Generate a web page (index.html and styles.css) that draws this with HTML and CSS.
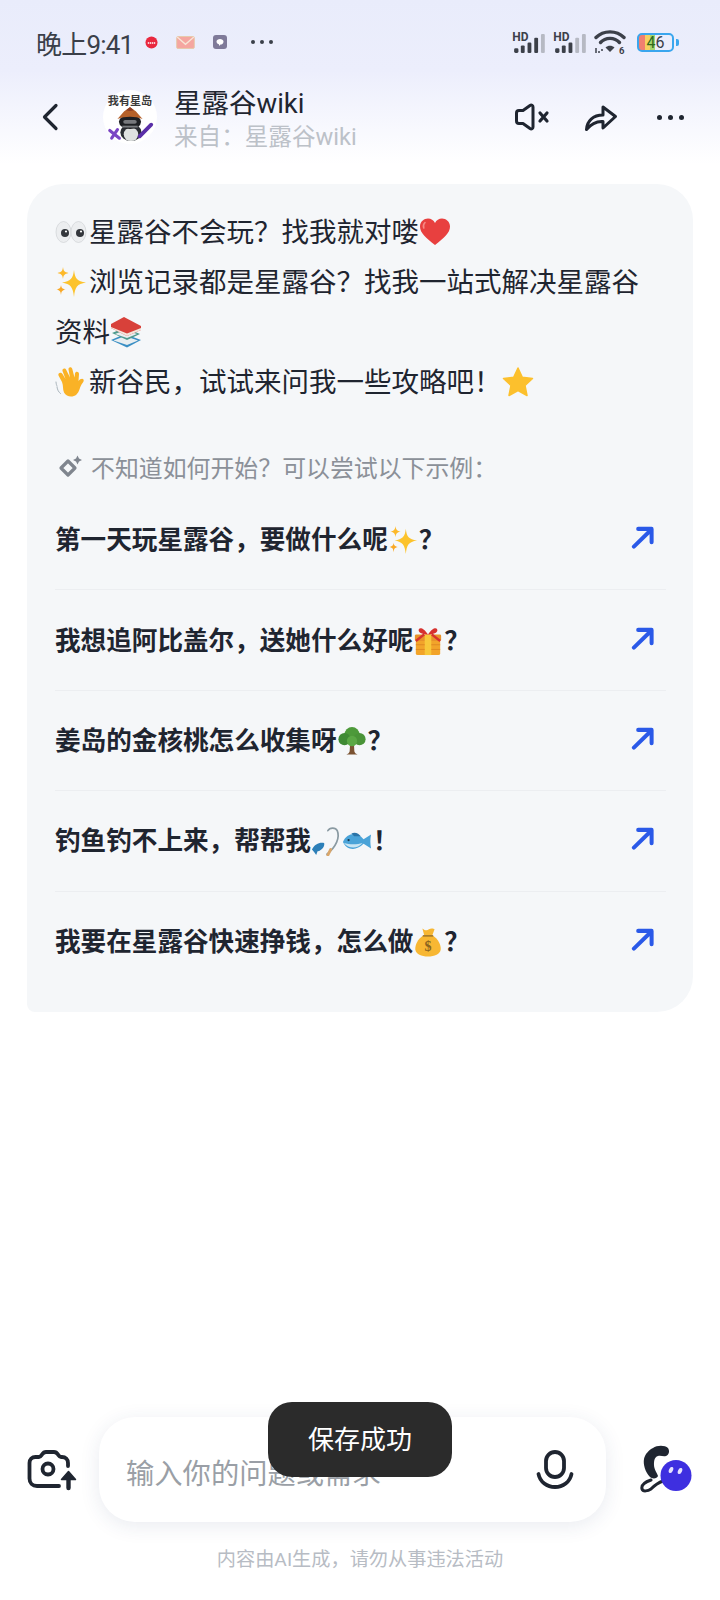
FILE: index.html
```html
<!DOCTYPE html>
<html lang="zh-CN">
<head>
  <meta charset="UTF-8">
  <title>星露谷wiki</title>
  <link rel="stylesheet" href="styles.css">
</head>
<body>
  <!-- emoji shapes, reused with <use> -->
  <svg class="defs" xmlns="http://www.w3.org/2000/svg">
    <symbol id="e-eyes" viewBox="0 0 32 32">
      <ellipse cx="8.500" cy="16" rx="7.500" ry="10.500" fill="#eceef0" stroke="#c9ccd0" stroke-width=".6"/>
      <ellipse cx="23.500" cy="16" rx="7.500" ry="10.500" fill="#eceef0" stroke="#c9ccd0" stroke-width=".6"/>
      <circle cx="10" cy="17" r="4" fill="#33373c"/>
      <circle cx="25" cy="17" r="4" fill="#33373c"/>
      <circle cx="11" cy="15.500" r="1.100" fill="#fff"/>
      <circle cx="26" cy="15.500" r="1.100" fill="#fff"/>
    </symbol>
    <symbol id="e-heart" viewBox="0 0 32 32">
      <path d="M16 29C7 22 1 17 1 10.500C1 5.500 5 2.500 9 2.500C12 2.500 14.600 4 16 7C17.400 4 20 2.500 23 2.500C27 2.500 31 5.500 31 10.500C31 17 25 22 16 29Z" fill="#e8403f"/>
      <path d="M6 6.500C4.500 8 4 10 4.800 12" stroke="#f58a85" stroke-width="1.600" fill="none" stroke-linecap="round"/>
    </symbol>
    <symbol id="e-spark" viewBox="0 0 32 32">
      <path d="M19 4C20 13 22 15 31 16.500C22 18 20 21 19 31C18 21 15.500 18 7 16.500C15.500 15 18 13 19 4Z" fill="#fcc32c"/>
      <path d="M8 1C8.500 5 9.500 6 13.500 7C9.500 8 8.500 9 8 13C7.500 9 6.500 8 2.500 7C6.500 6 7.500 5 8 1Z" fill="#fdb92a"/>
      <path d="M6 19C6.500 22 7 22.500 10.500 23.500C7 24.500 6.500 25 6 29C5.500 25 5 24.500 1.500 23.500C5 22.500 5.500 22 6 19Z" fill="#f9a825"/>
    </symbol>
    <symbol id="e-books" viewBox="0 0 32 32">
      <path d="M1 24L15 18L31 24L17 31.500Z" fill="#3a8fc4"/>
      <path d="M3.500 24.500L15 20L28 24.500L17 29Z" fill="#e9eef0"/>
      <path d="M2 17L15 11.500L30 18L17 24Z" fill="#4e9a8c"/>
      <path d="M5 18L15 14L27 18L17 22Z" fill="#e9eef0"/>
      <path d="M1 8L14 1L31 10L31 14L17 20L1 12Z" fill="#d8413a"/>
      <path d="M1 11L17 17.500L31 12V14L17 20L1 12Z" fill="#f3e6dc"/>
    </symbol>
    <symbol id="e-wave" viewBox="0 0 32 32">
      <path d="M7 16L3.500 9.500C2.500 7 6 5.500 7.500 8L10.500 13L7.500 5C6.800 2.500 10.200 1.500 11.300 4L15 11.500L13.500 3.500C13.200 1 16.700 .5 17.300 3L19.500 11.500L20 7.500C20.500 5 24 5.500 24 8L23.500 15C25 13 27.500 12 28.500 13.500C29.500 15 27.500 17 26.500 18.500C24.500 22 24.500 25.500 21.500 28.500C17.500 32 11.500 31 9 26.500C7.500 23 8.500 19.500 7 16Z" fill="#fab226"/>
      <path d="M2 21C2.500 24 3.500 26 5.500 27.500M1 16C1.200 18 1.400 19 2 20" stroke="#a9b4bb" stroke-width="1" fill="none" stroke-linecap="round"/>
    </symbol>
    <symbol id="e-star" viewBox="0 0 32 32">
      <path d="M16 2L20.300 11.300L30.500 12.500L23 19.500L25 29.500L16 24.500L7 29.500L9 19.500L1.500 12.500L11.700 11.300Z" fill="#fcc02d" stroke="#fcc02d" stroke-width="1.500" stroke-linejoin="round"/>
    </symbol>
    <symbol id="e-gift" viewBox="0 0 32 32">
      <rect x="3" y="11" width="26" height="20" rx="2" fill="#f2a42a"/>
      <rect x="2" y="9" width="28" height="7" rx="1.500" fill="#e8922a"/>
      <rect x="12.500" y="9" width="7" height="22" fill="#f8c83a"/>
      <path d="M3 20H12.500M19.500 20H29M3 25H12.500M19.500 25H29" stroke="#d98120" stroke-width=".8"/>
      <path d="M16 9C12 9 6 8 6 4.500C6 1 11 1 16 9C21 1 26 1 26 4.500C26 8 20 9 16 9Z" fill="#d7322f"/>
      <path d="M12 9L3 16M20 9L29 16" stroke="#d7322f" stroke-width="2.500"/>
    </symbol>
    <symbol id="e-tree" viewBox="0 0 32 32">
      <path d="M14 18H18L18.500 27C19 29 20.500 30 22 30.500H10C11.500 30 13 29 13.500 27Z" fill="#7a5231"/>
      <circle cx="16" cy="9" r="8" fill="#4d9a3a"/>
      <circle cx="8" cy="14" r="6.500" fill="#3f8a34"/>
      <circle cx="24" cy="14" r="6.500" fill="#4a9438"/>
      <circle cx="16" cy="16" r="5.500" fill="#5ba845"/>
    </symbol>
    <symbol id="e-rod" viewBox="0 0 32 32">
      <path d="M17 30C27 22 31 12 28 5C26 1 20 1.500 18 5" stroke="#8a9aa2" stroke-width="1.800" fill="none" stroke-linecap="round"/>
      <path d="M1 25C4 19 9 17 14 18C15 21 12 26 7 27L5.500 31L3.500 28Z" fill="#2c7fb8"/>
      <path d="M21 25L18 31" stroke="#d9a66a" stroke-width="3" stroke-linecap="round"/>
    </symbol>
    <symbol id="e-fish" viewBox="0 0 32 32">
      <path d="M1 17C5 8 15 5 23 14L31 9C30 14 30 18 31 24L23 19C15 27 5 26 1 17Z" fill="#4aa3d8"/>
      <path d="M2 18C7 24 16 25 22 18C16 20 8 20 2 18Z" fill="#c9e5f3"/>
      <path d="M10 8C14 6 18 8 20 11L13 11Z" fill="#2a74a8"/>
      <circle cx="7" cy="15" r="1.200" fill="#16364a"/>
    </symbol>
    <symbol id="e-bag" viewBox="0 0 32 32">
      <path d="M11 9C5 13 2 19 2.500 24C3 29 9 31.500 16 31.500C23 31.500 29 29 29.500 24C30 19 27 13 21 9Z" fill="#f7b733"/>
      <path d="M10 1.500C13 4 15 4 17 2.500C19 1 22 1.500 23 2.500L20.500 9H12Z" fill="#f7b733"/>
      <path d="M11 9.500H21" stroke="#8a6420" stroke-width="1.500" stroke-linecap="round"/>
      <text x="16" y="26" text-anchor="middle" class="bag-sign">$</text>
    </symbol>
    <symbol id="i-go" viewBox="0 0 24 24">
      <path d="M3 21.500L20 5M7.500 3H21.500V17" stroke="#2a59e8" stroke-width="4.200" fill="none" stroke-linecap="round" stroke-linejoin="round"/>
    </symbol>
  </svg>

  <div class="top">
    <div class="status">
      <span class="clock">晚上9:41</span>
      <svg class="note red" viewBox="0 0 14 14"><circle cx="7" cy="7" r="6.500" fill="#e9283f"/><path d="M3 7.500H11" stroke="#fff" stroke-width="1.800" stroke-dasharray="1.500 .7"/></svg>
      <svg class="note mail" viewBox="0 0 20 14"><rect x=".5" y=".5" width="19" height="13" rx="1.500" fill="#f5a6a0" stroke="#e5c9a8"/><path d="M1 1L10 9L19 1" stroke="#f7e6d6" stroke-width="1.400" fill="none"/></svg>
      <svg class="note bot" viewBox="0 0 14 14"><rect width="14" height="14" rx="3" fill="#7f7a99"/><path d="M3.500 6.500C3.500 3 10.500 3 10.500 6.500C10.500 9 8.500 9.500 7.500 9.500L6 11V9.300C4.500 9 3.500 8 3.500 6.500Z" fill="#fff"/></svg>
      <span class="dots-small"><i></i><i></i><i></i></span>
      <div class="status-right">
        <svg class="bars" viewBox="0 0 34 24">
          <text x="0" y="10" class="hd">HD</text>
          <rect x="2" y="18" width="4.500" height="5" rx="1.500" fill="#3c4049"/>
          <rect x="9" y="15" width="4" height="8" rx="1.200" fill="#3c4049"/>
          <rect x="16" y="12" width="4" height="11" rx="1.200" fill="#3c4049"/>
          <rect x="23" y="7" width="4" height="16" rx="1.200" fill="#3c4049"/>
          <rect x="30" y="3" width="4" height="20" rx="1.200" fill="#b6b9c3"/>
        </svg>
        <svg class="bars" viewBox="0 0 34 24">
          <text x="0" y="10" class="hd">HD</text>
          <rect x="2" y="18" width="4.500" height="5" rx="1.500" fill="#3c4049"/>
          <rect x="9" y="15" width="4" height="8" rx="1.200" fill="#3c4049"/>
          <rect x="16" y="12" width="4" height="11" rx="1.200" fill="#3c4049"/>
          <rect x="23" y="7" width="4" height="16" rx="1.200" fill="#b6b9c3"/>
          <rect x="30" y="3" width="4" height="20" rx="1.200" fill="#b6b9c3"/>
        </svg>
        <svg class="wifi" viewBox="0 0 32 26">
          <path d="M2 8.500C9.500 1 22.500 1 30 8.500" stroke="#3c4049" stroke-width="3.400" fill="none" stroke-linecap="round"/>
          <path d="M6.500 13.500C11.500 8 20.500 8 25.500 13.500" stroke="#3c4049" stroke-width="3.400" fill="none" stroke-linecap="round"/>
          <path d="M11.500 18.500L16 23L20.500 18.500C18 16 14 16 11.500 18.500Z" fill="#3c4049"/>
          <path d="M2 19V24M5 22L5 24M7 21H9" stroke="#3c4049" stroke-width="1.500" fill="none"/>
          <text x="25" y="25" class="wifi-six">6</text>
        </svg>
        <div class="battery">
          <div class="battery-body"><span class="battery-four">4</span><span>6</span></div>
          <i class="battery-tip"></i>
        </div>
      </div>
    </div>
    <div class="nav">
      <svg class="back" viewBox="0 0 18 28"><path d="M15 2.500L3.500 14L15 25.500" stroke="#1f2530" stroke-width="3.200" fill="none" stroke-linecap="round" stroke-linejoin="round"/></svg>
      <svg class="avatar" viewBox="0 0 56 56">
        <circle cx="28" cy="28" r="28" fill="#fff"/>
        <text x="28" y="15.500" text-anchor="middle" class="avatar-text">我有星岛</text>
        <ellipse cx="29" cy="44" rx="11" ry="9" fill="#2a2d33"/>
        <ellipse cx="29" cy="46" rx="7.500" ry="7" fill="#dfe2e1"/>
        <ellipse cx="28" cy="33" rx="11.500" ry="7.500" fill="#1d1f23"/>
        <path d="M15 30L22 22L28 18L34 22L41 30C33 27 23 27 15 30Z" fill="#b5612a"/>
        <path d="M24 21L28 17.500L32 21C29 22 27 22 24 21Z" fill="#8e3f24"/>
        <rect x="21" y="31" width="14" height="4" rx="2" fill="#77797d"/>
        <path d="M20 38H36" stroke="#777a7e" stroke-width="2"/>
        <path d="M38 48L50 36" stroke="#5a2fa8" stroke-width="4" stroke-linecap="round"/>
        <path d="M7 42L17 50M9 50L15 41" stroke="#7a45c4" stroke-width="3.200" stroke-linecap="round"/>
      </svg>
      <div class="nav-title">
        <div class="name">星露谷wiki</div>
        <div class="from">来自：星露谷wiki</div>
      </div>
      <div class="nav-actions">
        <svg class="mute" viewBox="0 0 36 30">
          <path d="M16 3.500C17.500 2.500 19 3.500 19 5V25C19 26.500 17.500 27.500 16 26.500L9 21.500H5C3.500 21.500 2.500 20.500 2.500 19V11C2.500 9.500 3.500 8.500 5 8.500H9Z" stroke="#1f2530" stroke-width="3" fill="none" stroke-linejoin="round"/>
          <path d="M26 11L33 19M33 11L26 19" stroke="#1f2530" stroke-width="3.200" stroke-linecap="round"/>
        </svg>
        <svg class="share" viewBox="0 0 34 30">
          <path d="M2.500 27.500C3 19 9 13 19 13V5L31.500 14.500L19 26V19.500C12 19 7 22 2.500 27.500Z" stroke="#1f2530" stroke-width="3" fill="none" stroke-linejoin="round" stroke-linecap="round"/>
        </svg>
        <span class="dots-big"><i></i><i></i><i></i></span>
      </div>
    </div>
  </div>

  <div class="card">
    <div class="intro">
      <p><svg class="emo"><use href="#e-eyes"/></svg>星露谷不会玩？找我就对喽<svg class="emo"><use href="#e-heart"/></svg></p>
      <p><svg class="emo"><use href="#e-spark"/></svg>浏览记录都是星露谷？找我一站式解决星露谷资料<svg class="emo"><use href="#e-books"/></svg></p>
      <p><svg class="emo"><use href="#e-wave"/></svg>新谷民，试试来问我一些攻略吧！<svg class="emo"><use href="#e-star"/></svg></p>
    </div>
    <div class="hint">
      <svg class="hint-icon" viewBox="0 0 26 26">
        <path d="M11 7L18 14L11 21L4 14Z" stroke="#7f858e" stroke-width="3.200" fill="none" stroke-linejoin="round"/>
        <path d="M20.500 1.500L22 4.500L25 6L22 7.500L20.500 10.500L19 7.500L16 6L19 4.500Z" fill="#7f858e"/>
      </svg>
      不知道如何开始？可以尝试以下示例：
    </div>
    <div class="row"><span>第一天玩星露谷，要做什么呢<svg class="emo"><use href="#e-spark"/></svg>？</span><svg class="go"><use href="#i-go"/></svg></div>
    <div class="row"><span>我想追阿比盖尔，送她什么好呢<svg class="emo"><use href="#e-gift"/></svg>？</span><svg class="go"><use href="#i-go"/></svg></div>
    <div class="row"><span>姜岛的金核桃怎么收集呀<svg class="emo"><use href="#e-tree"/></svg>？</span><svg class="go"><use href="#i-go"/></svg></div>
    <div class="row"><span>钓鱼钓不上来，帮帮我<svg class="emo"><use href="#e-rod"/></svg><svg class="emo"><use href="#e-fish"/></svg>！</span><svg class="go"><use href="#i-go"/></svg></div>
    <div class="row"><span>我要在星露谷快速挣钱，怎么做<svg class="emo"><use href="#e-bag"/></svg>？</span><svg class="go"><use href="#i-go"/></svg></div>
  </div>

  <div class="bottom">
    <div class="inputbar">
      <svg class="camera" viewBox="0 0 50 42">
        <path d="M32 37H10C5.500 37 2.500 34 2.500 29.500V14C2.500 10.500 5 8 8.500 8H12C13.500 8 14 7 15 5.500C16 4 17 3 19 3H27C29 3 30 4 31 5.500C32 7 32.500 8 34 8H35C38.500 8 41 10.500 41 14V17" stroke="#1f2530" stroke-width="3.800" fill="none" stroke-linecap="round"/>
        <circle cx="21" cy="20" r="5.500" stroke="#1f2530" stroke-width="3.800" fill="none"/>
        <path d="M41.500 39V28" stroke="#1f2530" stroke-width="4.400" stroke-linecap="round"/>
        <path d="M34.500 30.500L41.500 22.500L48.500 30.500Z" fill="#1f2530" stroke="#1f2530" stroke-width="1.500" stroke-linejoin="round"/>
      </svg>
      <div class="inputbox">
        <span class="placeholder">输入你的问题或需求</span>
        <svg class="mic" viewBox="0 0 38 40">
          <rect x="10" y="2" width="18" height="25" rx="9" stroke="#1f2530" stroke-width="3.800" fill="none"/>
          <path d="M2.500 24C4 32 11 37 19 37C27 37 34 32 35.500 24" stroke="#1f2530" stroke-width="3.800" fill="none" stroke-linecap="round"/>
        </svg>
      </div>
      <svg class="phone" viewBox="0 0 54 50">
        <path d="M14 3C18 0 26 0 29 3C31 6 30 10 27 11C24 12 22 10 19 11C15 12 15 17 15 20C15 24 18 28 19 31C18 34 13 34 11 32C6 27 4 19 5 14C6 9 10 5 14 3Z" fill="#1f2530"/>
        <path d="M12 35C6 37 2 40 3 44C4 47 9 46 12 44C15 41 18 38 24 36" stroke="#1f2530" stroke-width="3" fill="none" stroke-linecap="round"/>
        <circle cx="37" cy="30.500" r="15.500" fill="#3e2fe0"/>
        <ellipse cx="32" cy="25" rx="2" ry="3.200" transform="rotate(25 32 25)" fill="#e6e2ff"/>
        <ellipse cx="41" cy="26" rx="2" ry="3.200" transform="rotate(25 41 26)" fill="#e6e2ff"/>
      </svg>
    </div>
    <div class="disclaimer">内容由AI生成，请勿从事违法活动</div>
  </div>

  <div class="toast">保存成功</div>
</body>
</html>
```

FILE: styles.css
```css
html, body {
  height: 100%;
  margin: 0;
  padding: 0;
}
body {
  width: 720px;
  height: 1600px;
  display: flex;
  flex-direction: column;
  position: relative;
  overflow: hidden;
  background: #fff;
  color: #1f2530;
  font-family: Roboto, "Noto Sans CJK SC", sans-serif;
}
p {
  margin: 0;
}
i {
  display: block;
}
.defs {
  display: none;
}
.bag-sign {
  font: bold 15px "Liberation Serif", serif;
  fill: #8a6420;
}
.hd {
  font: bold 12.500px Roboto, sans-serif;
  fill: #3c4049;
}
.wifi-six {
  font: bold 9.500px Roboto, sans-serif;
  fill: #3c4049;
}
.avatar-text {
  font: bold 11.500px "Noto Sans CJK SC", sans-serif;
  fill: #3a3a3a;
}

/* top */
.top {
  height: 164px;
  background: linear-gradient(#e9ecfb 0, #eceefc 70px, #fff 164px);
  flex: none;
}
.status {
  height: 52px;
  padding: 16px 0 0 36px;
  display: flex;
  align-items: center;
}
.clock {
  font-size: 26px;
  color: #3a3f49;
  letter-spacing: -.8px;
}
.note {
  flex: none;
}
.red {
  width: 13px;
  height: 13px;
  margin-left: 12px;
}
.mail {
  width: 19px;
  height: 13px;
  margin-left: 18px;
}
.bot {
  width: 14px;
  height: 14px;
  margin-left: 18px;
}
.dots-small, .dots-big {
  display: flex;
}
.dots-small {
  gap: 5px;
  margin-left: 24px;
}
.dots-small i {
  width: 4px;
  height: 4px;
  border-radius: 50%;
  background: #3a3f49;
}
.status-right {
  margin-left: auto;
  padding-right: 41px;
  display: flex;
  align-items: center;
  gap: 8px;
}
.bars {
  width: 33px;
  height: 23px;
}
.wifi {
  width: 32px;
  height: 26px;
}
.battery {
  display: flex;
  align-items: center;
  margin-left: 3px;
}
.battery-body {
  width: 33px;
  height: 15px;
  border: 2px solid #3aa6ee;
  border-radius: 5px;
  display: flex;
  align-items: center;
  justify-content: center;
  font-size: 16px;
  line-height: 15px;
  color: #3a3f49;
  background: linear-gradient(90deg, #f07f70 0 6px, #f5d060 6px 11px, #a6d672 11px 16px, transparent 16px);
}
.battery-four {
  color: #2f6a1c;
}
.battery-tip {
  width: 3px;
  height: 7px;
  margin-left: 2px;
  background: #3aa6ee;
  border-radius: 0 2px 2px 0;
}
.nav {
  height: 94px;
  padding: 2px 36px 0 41px;
  display: flex;
  align-items: center;
}
.back {
  width: 18px;
  height: 28px;
}
.avatar {
  width: 54px;
  height: 54px;
  margin-left: 44px;
}
.nav-title {
  margin-left: 17px;
  padding-top: 6px;
}
.name {
  font-size: 27.500px;
  line-height: 34px;
  color: #1f2530;
}
.from {
  font-size: 23.600px;
  line-height: 32px;
  color: #bcc1c8;
}
.nav-actions {
  margin-left: auto;
  display: flex;
  align-items: center;
}
.mute {
  width: 36px;
  height: 30px;
}
.share {
  width: 34px;
  height: 30px;
  margin-left: 34px;
}
.dots-big {
  gap: 6px;
  margin-left: 39px;
}
.dots-big i {
  width: 5px;
  height: 5px;
  border-radius: 50%;
  background: #1f2530;
}

/* card */
.card {
  margin: 20px 27px 0;
  padding: 24px 27px 20px 28px;
  background: #f5f7f9;
  border-radius: 36px 36px 36px 8px;
}
.intro {
  font-size: 27.500px;
  line-height: 50px;
}
.intro .emo {
  width: 32px;
  height: 32px;
  vertical-align: -6px;
  margin-right: 2px;
}
.emo {
  width: 30px;
  height: 30px;
  vertical-align: -6px;
  margin-right: 1px;
}
.hint {
  margin-top: 35px;
  height: 47px;
  display: flex;
  align-items: center;
  gap: 8px;
  font-size: 23.900px;
  color: #8b9098;
}
.hint-icon {
  width: 26px;
  height: 26px;
  margin-left: 2px;
}
.row {
  height: 100.400px;
  padding-bottom: 4px;
  box-sizing: border-box;
  display: flex;
  align-items: center;
  justify-content: space-between;
  font-size: 25.600px;
  font-weight: 700;
  border-bottom: 1px solid #eceef1;
}
.row:last-child {
  border-bottom: none;
}
.go {
  width: 23px;
  height: 23px;
  margin-right: 12px;
}

/* bottom */
.bottom {
  margin-top: auto;
  flex: none;
}
.inputbar {
  padding: 0 27px;
  display: flex;
  align-items: center;
}
.camera {
  width: 50px;
  height: 42px;
  flex: none;
}
.inputbox {
  width: 509px;
  height: 105px;
  margin-left: 22px;
  padding: 0 32px 0 27px;
  box-sizing: border-box;
  background: #fff;
  border-radius: 36px;
  box-shadow: 0 4px 20px rgba(40, 60, 110, .1);
  display: flex;
  align-items: center;
  justify-content: space-between;
}
.placeholder {
  font-size: 28.300px;
  color: #9a9fa6;
  padding-top: 4px;
}
.mic {
  width: 38px;
  height: 40px;
}
.phone {
  width: 54px;
  height: 50px;
  margin-left: 33px;
  flex: none;
}
.disclaimer {
  margin-top: 26px;
  padding-bottom: 28px;
  line-height: 24px;
  font-size: 19.200px;
  color: #b7bcc4;
  text-align: center;
}

/* toast sits over the input bar */
.toast {
  position: absolute;
  left: 268px;
  top: 1402px;
  width: 184px;
  height: 75px;
  border-radius: 24px;
  background: #2b2b2b;
  color: #fff;
  font-size: 26px;
  line-height: 76px;
  text-align: center;
}
```
